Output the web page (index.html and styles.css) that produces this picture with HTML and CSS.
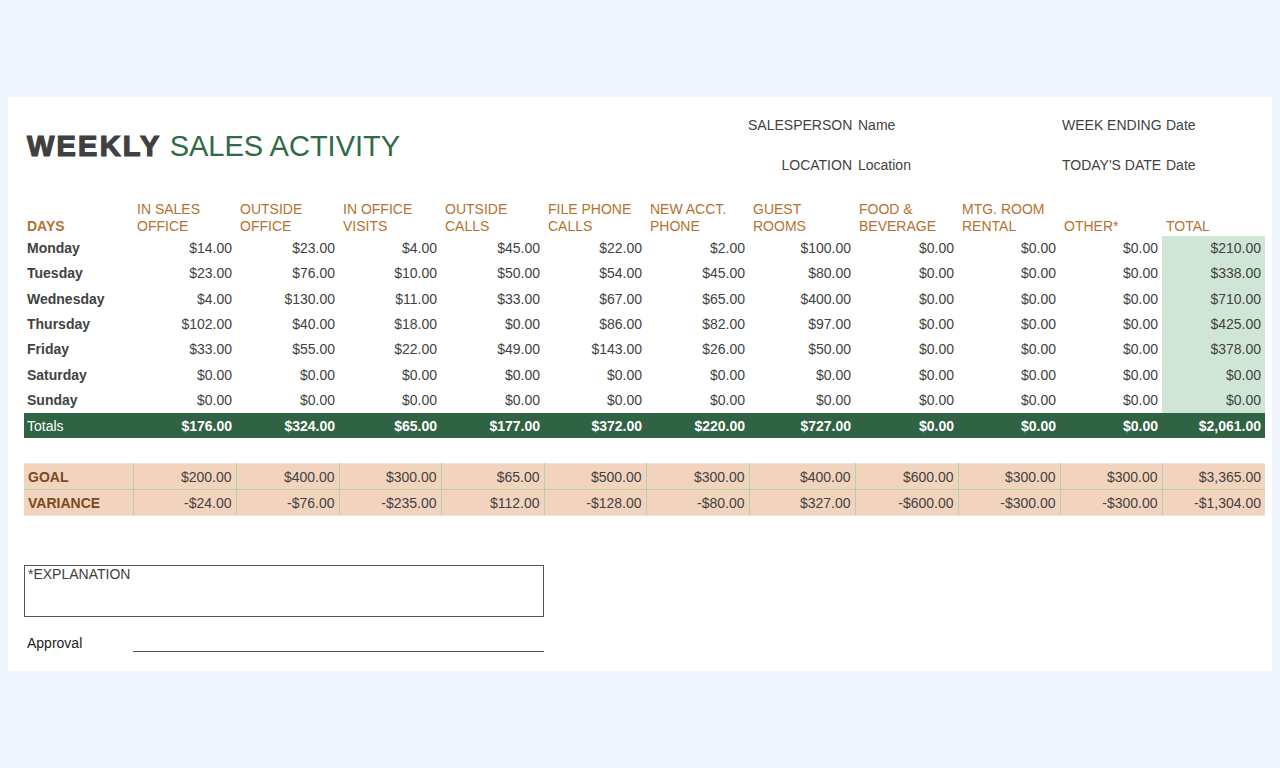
FILE: index.html
```html
<!DOCTYPE html>
<html>
<head>
<meta charset="utf-8">
<link rel="stylesheet" href="styles.css">
</head>
<body>
<div class="card">
  <div class="head">
    <h1 class="title"><span class="strong">WEEKLY</span> SALES ACTIVITY</h1>
    <div class="lbl r1c1">SALESPERSON</div><div class="val r1c2">Name</div>
    <div class="lbl r1c3">WEEK ENDING</div><div class="val r1c4">Date</div>
    <div class="lbl r2c1">LOCATION</div><div class="val r2c2">Location</div>
    <div class="lbl r2c3">TODAY'S DATE</div><div class="val r2c4">Date</div>
  </div>
  <table class="sheet">
    <colgroup>
      <col style="width:109px"><col style="width:103px"><col style="width:103px"><col style="width:102px"><col style="width:103px"><col style="width:102px"><col style="width:103px"><col style="width:106px"><col style="width:103px"><col style="width:102px"><col style="width:102px"><col style="width:103px">
    </colgroup>
    <thead>
      <tr class="hdr">
        <th class="days">DAYS</th><th>IN SALES<br>OFFICE</th><th>OUTSIDE<br>OFFICE</th><th>IN OFFICE<br>VISITS</th><th>OUTSIDE<br>CALLS</th><th>FILE PHONE<br>CALLS</th><th>NEW ACCT.<br>PHONE</th><th>GUEST<br>ROOMS</th><th>FOOD &amp;<br>BEVERAGE</th><th>MTG. ROOM<br>RENTAL</th><th>OTHER*</th><th>TOTAL</th>
      </tr>
    </thead>
    <tbody>
      <tr class="row"><td class="day">Monday</td><td>$14.00</td><td>$23.00</td><td>$4.00</td><td>$45.00</td><td>$22.00</td><td>$2.00</td><td>$100.00</td><td>$0.00</td><td>$0.00</td><td>$0.00</td><td class="tot">$210.00</td></tr>
      <tr class="row"><td class="day">Tuesday</td><td>$23.00</td><td>$76.00</td><td>$10.00</td><td>$50.00</td><td>$54.00</td><td>$45.00</td><td>$80.00</td><td>$0.00</td><td>$0.00</td><td>$0.00</td><td class="tot">$338.00</td></tr>
      <tr class="row"><td class="day">Wednesday</td><td>$4.00</td><td>$130.00</td><td>$11.00</td><td>$33.00</td><td>$67.00</td><td>$65.00</td><td>$400.00</td><td>$0.00</td><td>$0.00</td><td>$0.00</td><td class="tot">$710.00</td></tr>
      <tr class="row"><td class="day">Thursday</td><td>$102.00</td><td>$40.00</td><td>$18.00</td><td>$0.00</td><td>$86.00</td><td>$82.00</td><td>$97.00</td><td>$0.00</td><td>$0.00</td><td>$0.00</td><td class="tot">$425.00</td></tr>
      <tr class="row"><td class="day">Friday</td><td>$33.00</td><td>$55.00</td><td>$22.00</td><td>$49.00</td><td>$143.00</td><td>$26.00</td><td>$50.00</td><td>$0.00</td><td>$0.00</td><td>$0.00</td><td class="tot">$378.00</td></tr>
      <tr class="row"><td class="day">Saturday</td><td>$0.00</td><td>$0.00</td><td>$0.00</td><td>$0.00</td><td>$0.00</td><td>$0.00</td><td>$0.00</td><td>$0.00</td><td>$0.00</td><td>$0.00</td><td class="tot">$0.00</td></tr>
      <tr class="row"><td class="day">Sunday</td><td>$0.00</td><td>$0.00</td><td>$0.00</td><td>$0.00</td><td>$0.00</td><td>$0.00</td><td>$0.00</td><td>$0.00</td><td>$0.00</td><td>$0.00</td><td class="tot">$0.00</td></tr>
      <tr class="totals"><td class="day">Totals</td><td>$176.00</td><td>$324.00</td><td>$65.00</td><td>$177.00</td><td>$372.00</td><td>$220.00</td><td>$727.00</td><td>$0.00</td><td>$0.00</td><td>$0.00</td><td>$2,061.00</td></tr>
      <tr class="spacer"><td colspan="12"></td></tr>
      <tr class="goal"><td class="day">GOAL</td><td>$200.00</td><td>$400.00</td><td>$300.00</td><td>$65.00</td><td>$500.00</td><td>$300.00</td><td>$400.00</td><td>$600.00</td><td>$300.00</td><td>$300.00</td><td>$3,365.00</td></tr>
      <tr class="goal var"><td class="day">VARIANCE</td><td>-$24.00</td><td>-$76.00</td><td>-$235.00</td><td>$112.00</td><td>-$128.00</td><td>-$80.00</td><td>$327.00</td><td>-$600.00</td><td>-$300.00</td><td>-$300.00</td><td>-$1,304.00</td></tr>
    </tbody>
  </table>
  <div class="explain">*EXPLANATION</div>
  <div class="approval">
    <span class="appr-label">Approval</span>
    <span class="appr-line"></span>
  </div>
</div>
</body>
</html>
```

FILE: styles.css
```css
html, body {
  margin: 0;
  padding: 0;
}
body {
  background: #eff4fd;
  font-family: "Liberation Sans", Arial, sans-serif;
  font-size: 14px;
  color: #424242;
  padding: 97px 8px 0 8px;
  height: 768px;
  box-sizing: border-box;
}
.card {
  background: #ffffff;
  height: 574px;
  box-sizing: border-box;
  padding: 8px 15px 0 16px;
}
.head {
  display: grid;
  grid-template-columns: 718px 104px 198px 98px 99px;
  grid-template-rows: 40px 40px;
  column-gap: 6px;
  align-items: center;
}
.title {
  grid-row: 1 / 3;
  grid-column: 1;
  margin: 0;
  padding: 0 0 0 3px;
  font-size: 29px;
  font-weight: normal;
  color: #2e6a46;
  line-height: 34px;
  position: relative;
  top: 1px;
  white-space: nowrap;
}
.title .strong {
  font-weight: bold;
  color: #404040;
  -webkit-text-stroke: 1.2px #404040;
  letter-spacing: 2.2px;
}
.lbl {
  text-align: right;
  white-space: nowrap;
}
.val {
  white-space: nowrap;
}
.r1c1 { grid-row: 1; grid-column: 2; }
.r1c2 { grid-row: 1; grid-column: 3; }
.r1c3 { grid-row: 1; grid-column: 4; }
.r1c4 { grid-row: 1; grid-column: 5; }
.r2c1 { grid-row: 2; grid-column: 2; }
.r2c2 { grid-row: 2; grid-column: 3; }
.r2c3 { grid-row: 2; grid-column: 4; }
.r2c4 { grid-row: 2; grid-column: 5; }

.sheet {
  border-collapse: collapse;
  table-layout: fixed;
  width: 1241px;
}
.sheet th, .sheet td {
  padding: 0 4px;
  white-space: nowrap;
}
.hdr th {
  height: 50px;
  vertical-align: bottom;
  text-align: left;
  font-weight: normal;
  color: #b4722f;
  line-height: 17px;
  padding-bottom: 1px;
}
.hdr th.days {
  font-weight: bold;
  padding-left: 3px;
}
.row td, .totals td, .goal td {
  text-align: right;
}
.row td {
  height: 24.3px;
  padding-bottom: 1px;
}
.row td.day {
  text-align: left;
  font-weight: bold;
  padding-left: 3px;
}
.row td.tot {
  background: #cfe6d6;
}
.totals td {
  height: 25px;
  background: #2f6343;
  color: #ffffff;
  font-weight: bold;
}
.totals td.day {
  text-align: left;
  font-weight: normal;
  padding-left: 3px;
}
.spacer td {
  height: 25px;
  padding: 0;
}
.goal td {
  height: 25px;
  background: #f2d3bd;
  border-left: 1px solid #b3d3a6;
  border-right: 1px solid #b3d3a6;
  border-top: 1px solid #f6e2d4;
}
.goal.var td {
  border-top: 1px solid #b3d3a6;
  border-bottom: 1px solid #f6e2d4;
}
.goal td:first-child {
  border-left: none;
}
.goal td:last-child {
  border-right: none;
}
.goal td.day {
  text-align: left;
  font-weight: bold;
  color: #7a4a1f;
}
.explain {
  margin-top: 49px;
  width: 520px;
  height: 52px;
  box-sizing: border-box;
  border: 1px solid #555555;
  padding: 0 3px;
  line-height: 16px;
  color: #404040;
}
.approval {
  display: flex;
  align-items: flex-end;
  margin-top: 18px;
  width: 520px;
}
.appr-label {
  width: 109px;
  padding-left: 3px;
  box-sizing: border-box;
  color: #222222;
  line-height: 16px;
}
.appr-line {
  flex: 1;
  border-bottom: 1px solid #555555;
  height: 0;
  margin-bottom: -1px;
}
```
